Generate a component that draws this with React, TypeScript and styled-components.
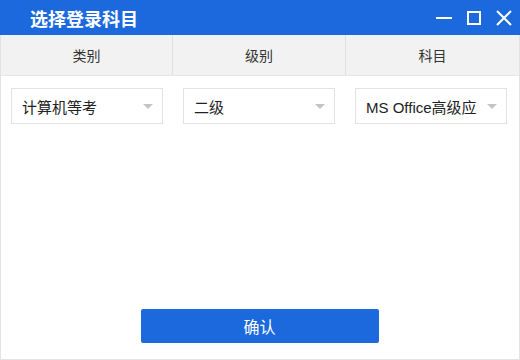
import React from "react";
import styled, { createGlobalStyle } from "styled-components";

const Global = createGlobalStyle`
  html, body { margin: 0; padding: 0; background: #ffffff; }
  body { font-family: "Liberation Sans", "Noto Sans CJK SC", sans-serif; }
  * { box-sizing: border-box; }
`;

const Window = styled.div`
  width: 520px;
  height: 360px;
  display: flex;
  flex-direction: column;
  background: #ffffff;
`;

const TitleBar = styled.div`
  height: 35px;
  background: #1b69dd;
  display: flex;
  align-items: center;
  padding: 0 8px 0 30px;
`;

const Title = styled.div`
  flex: 1;
  color: #ffffff;
  font-size: 18px;
  font-weight: bold;
`;

const Controls = styled.div`
  display: flex;
  align-items: center;
  gap: 14px;
`;

const CtrlBtn = styled.div`
  width: 16px;
  height: 16px;
  display: flex;
  align-items: center;
  justify-content: center;
`;

const Body = styled.div`
  flex: 1;
  display: flex;
  flex-direction: column;
  border: 1px solid #e3e3e3;
  border-top: none;
`;

const Tabs = styled.div`
  height: 41px;
  display: grid;
  grid-template-columns: 172px 173px 1fr;
  background: #f2f2f2;
  border-bottom: 1px solid #e6e6e6;
`;

const Tab = styled.div<{ $divider?: boolean }>`
  display: flex;
  align-items: center;
  justify-content: center;
  font-size: 14px;
  color: #333333;
  border-right: ${(p) => (p.$divider ? "1px solid #e0e0e0" : "none")};
`;

const Selects = styled.div`
  display: grid;
  grid-template-columns: repeat(3, 152px);
  column-gap: 20px;
  padding: 12px 0 0 10px;
`;

const Select = styled.div`
  height: 36px;
  border: 1px solid #e3e3e3;
  display: flex;
  align-items: center;
  padding: 0 9px 0 10px;
  background: #ffffff;
`;

const SelectText = styled.div`
  flex: 1;
  font-size: 15px;
  color: #222222;
  white-space: nowrap;
`;

const Arrow = styled.div`
  width: 0;
  height: 0;
  border-left: 5px solid transparent;
  border-right: 5px solid transparent;
  border-top: 5px solid #c4c4c4;
  margin-left: 6px;
  flex-shrink: 0;
`;

const Spacer = styled.div`
  flex: 1;
`;

const Footer = styled.div`
  display: flex;
  justify-content: center;
  padding-bottom: 16px;
`;

const Confirm = styled.button`
  width: 238px;
  height: 34px;
  border: none;
  border-radius: 2px;
  background: #1b69dd;
  color: #ffffff;
  font-family: "Liberation Sans", "Noto Sans CJK SC", sans-serif;
  font-size: 16px;
  margin-left: -1px;
`;

const options = ["计算机等考", "二级", "MS Office高级应"];

export default function App() {
  return (
    <>
      <Global />
      <Window>
        <TitleBar>
          <Title>选择登录科目</Title>
          <Controls>
            <CtrlBtn>
              <svg width="16" height="16" viewBox="0 0 16 16">
                <rect x="0" y="7" width="16" height="2" fill="#fff" />
              </svg>
            </CtrlBtn>
            <CtrlBtn>
              <svg width="16" height="16" viewBox="0 0 16 16">
                <rect x="2" y="2" width="12" height="12" fill="none" stroke="#fff" strokeWidth="2" />
              </svg>
            </CtrlBtn>
            <CtrlBtn>
              <svg width="16" height="16" viewBox="0 0 16 16">
                <path d="M1 1 L15 15 M15 1 L1 15" stroke="#fff" strokeWidth="2" />
              </svg>
            </CtrlBtn>
          </Controls>
        </TitleBar>
        <Body>
          <Tabs>
            <Tab $divider>类别</Tab>
            <Tab $divider>级别</Tab>
            <Tab>科目</Tab>
          </Tabs>
          <Selects>
            {options.map((o) => (
              <Select key={o}>
                <SelectText>{o}</SelectText>
                <Arrow />
              </Select>
            ))}
          </Selects>
          <Spacer />
          <Footer>
            <Confirm>确认</Confirm>
          </Footer>
        </Body>
      </Window>
    </>
  );
}
